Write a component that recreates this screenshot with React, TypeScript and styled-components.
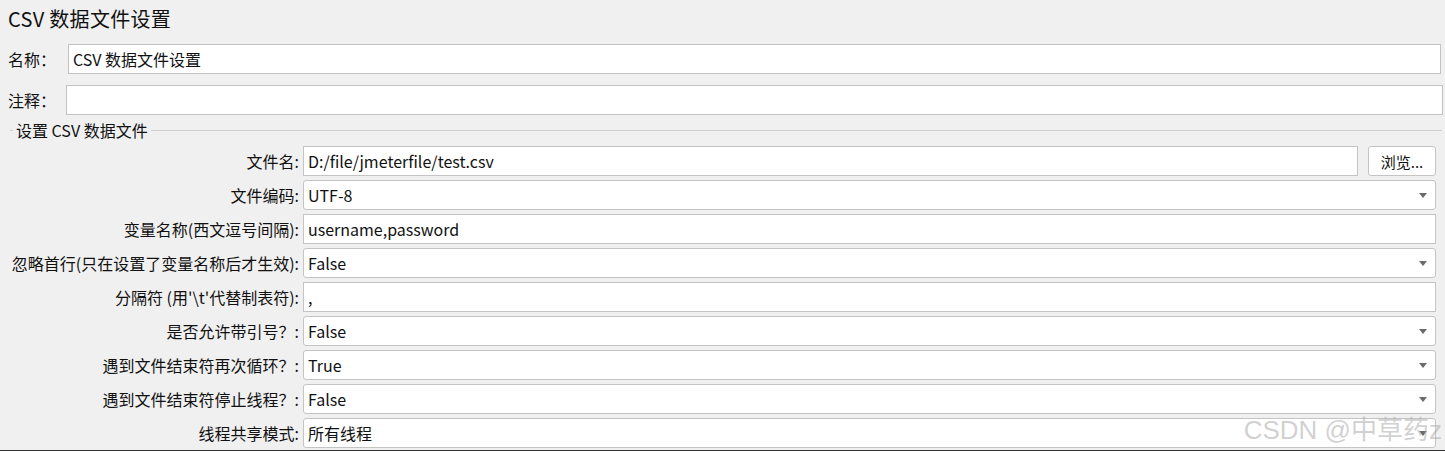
import React from "react";
import styled, { createGlobalStyle } from "styled-components";

const GlobalStyle = createGlobalStyle`
  html, body {
    margin: 0;
    padding: 0;
    background: #f0f0f0;
  }
  * { box-sizing: border-box; }
`;

const FONT = `"Noto Sans CJK SC", "Noto Sans", sans-serif`;

const Page = styled.div`
  position: relative;
  width: 1445px;
  height: 451px;
  overflow: hidden;
  background: #f0f0f0;
  font-family: ${FONT};
  color: #111;
  border-bottom: 1px solid #333;
`;

const Title = styled.h1`
  margin: 0;
  padding: 4px 0 0 8px;
  height: 44px;
  font-size: 20px;
  font-weight: 400;
  line-height: 30px;
  letter-spacing: 0.3px;
  color: #111;
`;

const TopRow = styled.div<{ $labelWidth: number; $right: number; $mb: number }>`
  display: grid;
  grid-template-columns: ${(p) => p.$labelWidth}px 1fr;
  align-items: center;
  padding: 0 ${(p) => p.$right}px 0 8px;
  margin-bottom: ${(p) => p.$mb}px;
  height: 30px;
`;

const TopLabel = styled.label`
  font-size: 16px;
  color: #111;
`;

const TextBox = styled.div`
  height: 30px;
  background: #fff;
  border: 1px solid #c2c2c2;
  padding: 0 4px;
  display: flex;
  align-items: center;
  font-size: 16px;
  color: #111;
  white-space: nowrap;
`;

const GroupHeader = styled.div`
  display: flex;
  align-items: center;
  gap: 3px;
  padding: 0 3px 0 10px;
  height: 30px;
  margin-top: -1px;
  font-size: 16px;
  color: #111;
  &::before {
    content: "";
    width: 3px;
    border-top: 1px solid #cfcfcf;
  }
  &::after {
    content: "";
    flex: 1;
    border-top: 1px solid #cfcfcf;
  }
`;

const FieldGrid = styled.div`
  display: grid;
  grid-template-columns: 299px 1fr;
  column-gap: 4px;
  row-gap: 4px;
  padding: 0 9px 0 0;
  margin-top: 1px;
`;

const FieldLabel = styled.label`
  height: 30px;
  display: flex;
  align-items: center;
  justify-content: flex-end;
  font-size: 16px;
  color: #111;
  white-space: nowrap;
`;

const FieldCell = styled.div`
  display: flex;
  gap: 10px;
  height: 30px;
`;

const Field = styled.div<{ $combo?: boolean }>`
  flex: 1;
  height: 30px;
  background: #fff;
  border: 1px solid #c4c4c4;
  border-radius: ${(p) => (p.$combo ? "3px" : "0")};
  padding: 0 4px;
  display: flex;
  align-items: center;
  justify-content: space-between;
  font-size: 16px;
  color: #111;
  white-space: nowrap;
`;

const Arrow = styled.span`
  width: 0;
  height: 0;
  margin-right: 4px;
  border-left: 4px solid transparent;
  border-right: 4px solid transparent;
  border-top: 5px solid #6b6b6b;
`;

const BrowseButton = styled.button`
  width: 68px;
  height: 30px;
  background: #fff;
  border: 1px solid #c4c4c4;
  border-radius: 3px;
  font-family: ${FONT};
  font-size: 15px;
  color: #111;
  padding: 0;
  cursor: pointer;
`;

const Watermark = styled.div`
  position: absolute;
  right: 3px;
  top: 409px;
  font-family: "Liberation Sans", "Noto Sans CJK SC", sans-serif;
  font-size: 26px;
  color: rgba(170, 170, 170, 0.55);
  pointer-events: none;
  white-space: nowrap;
`;

type Row = { label: string; value: string; combo?: boolean; browse?: boolean };

const rows: Row[] = [
  { label: "文件名:", value: "D:/file/jmeterfile/test.csv", browse: true },
  { label: "文件编码:", value: "UTF-8", combo: true },
  { label: "变量名称(西文逗号间隔):", value: "username,password" },
  { label: "忽略首行(只在设置了变量名称后才生效):", value: "False", combo: true },
  { label: "分隔符 (用'\\t'代替制表符):", value: "," },
  { label: "是否允许带引号？:", value: "False", combo: true },
  { label: "遇到文件结束符再次循环？:", value: "True", combo: true },
  { label: "遇到文件结束符停止线程？:", value: "False", combo: true },
  { label: "线程共享模式:", value: "所有线程", combo: true },
];

export default function App() {
  return (
    <>
      <GlobalStyle />
      <Page>
        <Title>CSV 数据文件设置</Title>
        <TopRow $labelWidth={60} $right={4} $mb={11}>
          <TopLabel>名称：</TopLabel>
          <TextBox>CSV 数据文件设置</TextBox>
        </TopRow>
        <TopRow $labelWidth={58} $right={2} $mb={1}>
          <TopLabel>注释：</TopLabel>
          <TextBox />
        </TopRow>
        <GroupHeader>设置 CSV 数据文件</GroupHeader>
        <FieldGrid>
          {rows.map((r) => (
            <React.Fragment key={r.label}>
              <FieldLabel>{r.label}</FieldLabel>
              <FieldCell>
                <Field $combo={r.combo}>
                  <span>{r.value}</span>
                  {r.combo && <Arrow />}
                </Field>
                {r.browse && <BrowseButton>浏览...</BrowseButton>}
              </FieldCell>
            </React.Fragment>
          ))}
        </FieldGrid>
        <Watermark>CSDN @中草药z</Watermark>
      </Page>
    </>
  );
}
